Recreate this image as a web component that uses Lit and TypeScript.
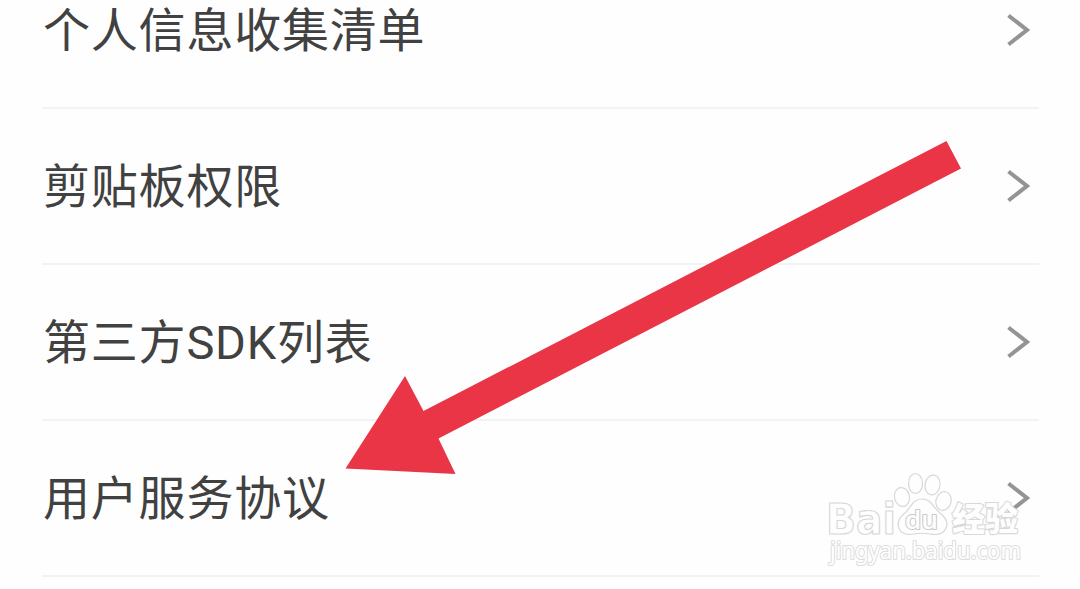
/**
 * Settings list with a pointer annotation and watermark
 */

import { LitElement, css, html } from "lit";
import { customElement, property } from "lit/decorators.js";

@customElement("list-row")
export class ListRow extends LitElement {
	static styles = css`
		:host {
			display: flex;
			align-items: center;
			justify-content: space-between;
			box-sizing: border-box;
			height: 156px;
			padding: 1px 8px 0 1px;
			border-bottom: 2px solid #f3f3f3;
		}

		.label {
			font-size: 47px;
			line-height: 64px;
			letter-spacing: 0.8px;
			color: #414141;
			white-space: nowrap;
		}

		.chevron {
			width: 24px;
			height: 36px;
			margin-bottom: 2px;
			fill: none;
			stroke: #949494;
			stroke-width: 4;
		}
	`;

	@property() label = "";

	render() {
		return html`
			<span class="label">${this.label}</span>
			<svg class="chevron" viewBox="0 0 24 36">
				<path d="M1.500 3.500L20 18L1.500 32.500" />
			</svg>
		`;
	}
}

@customElement("app-root")
export class AppRoot extends LitElement {
	static styles = css`
		:host {
			display: block;
			position: relative;
			box-sizing: border-box;
			height: 589px;
			overflow: hidden;
			background: #fefefe;
			font-family: Roboto, "Noto Sans CJK SC", sans-serif;
		}

		.list {
			margin: -47px 41px 0 42px;
		}

		.overlay {
			position: absolute;
			inset: 0;
			width: 1080px;
			height: 589px;
		}

		.arrow {
			fill: #ea3546;
		}

		.mark {
			fill: #fefefe;
			stroke: #d8d8d8;
			stroke-width: 1.2;
			stroke-linejoin: round;
		}

		.brand {
			font: bold 42px "DejaVu Sans", sans-serif;
		}

		.du {
			font: 600 25px "Open Sans", sans-serif;
			paint-order: stroke;
			stroke: #c9c9c9;
			stroke-width: 2;
		}

		.cjk {
			font: 900 33px "Noto Sans CJK SC", sans-serif;
			paint-order: stroke;
			stroke-width: 2.2;
		}

		.site {
			font: 23px "Noto Sans", sans-serif;
			paint-order: stroke;
			stroke: #dedede;
			stroke-width: 2.2;
		}
	`;

	private items = ["个人信息收集清单", "剪贴板权限", "第三方SDK列表", "用户服务协议"];

	render() {
		return html`
			<div class="list">
				${this.items.map((item) => html`<list-row .label=${item}></list-row>`)}
			</div>
			<svg class="overlay" viewBox="0 0 1080 589">
				<path class="arrow" d="M946.500 141L961 168.500L438.500 438.500L455.500 474L345.500 468.500L405 376L423.500 411Z" />
				<g class="mark">
					<text class="brand" x="826" y="533.500" textLength="70" lengthAdjust="spacingAndGlyphs">Bai</text>
					<ellipse cx="902" cy="497" rx="7.500" ry="9.500" transform="rotate(-12 902 497)" />
					<ellipse cx="915.500" cy="483.500" rx="7" ry="10" />
					<ellipse cx="932.500" cy="485" rx="7.500" ry="10" transform="rotate(10 932.500 485)" />
					<ellipse cx="943.500" cy="501" rx="7.500" ry="9.500" transform="rotate(14 943.500 501)" />
					<path d="M922 499C931 499 933 507 939 512C945 517 948 521 946.500 527C944 534 938 535.500 930 534Q922 532.500 914 534C906 535.500 900 533 898.500 527C897 520 901 516 906 512C911 507 913 499 922 499Z" />
					<text class="du" x="905" y="529" textLength="33" lengthAdjust="spacingAndGlyphs">du</text>
					<text class="cjk" x="952" y="531" textLength="66" lengthAdjust="spacingAndGlyphs">经验</text>
					<text class="site" x="830" y="559" textLength="191" lengthAdjust="spacingAndGlyphs">jingyan.baidu.com</text>
				</g>
			</svg>
		`;
	}
}
